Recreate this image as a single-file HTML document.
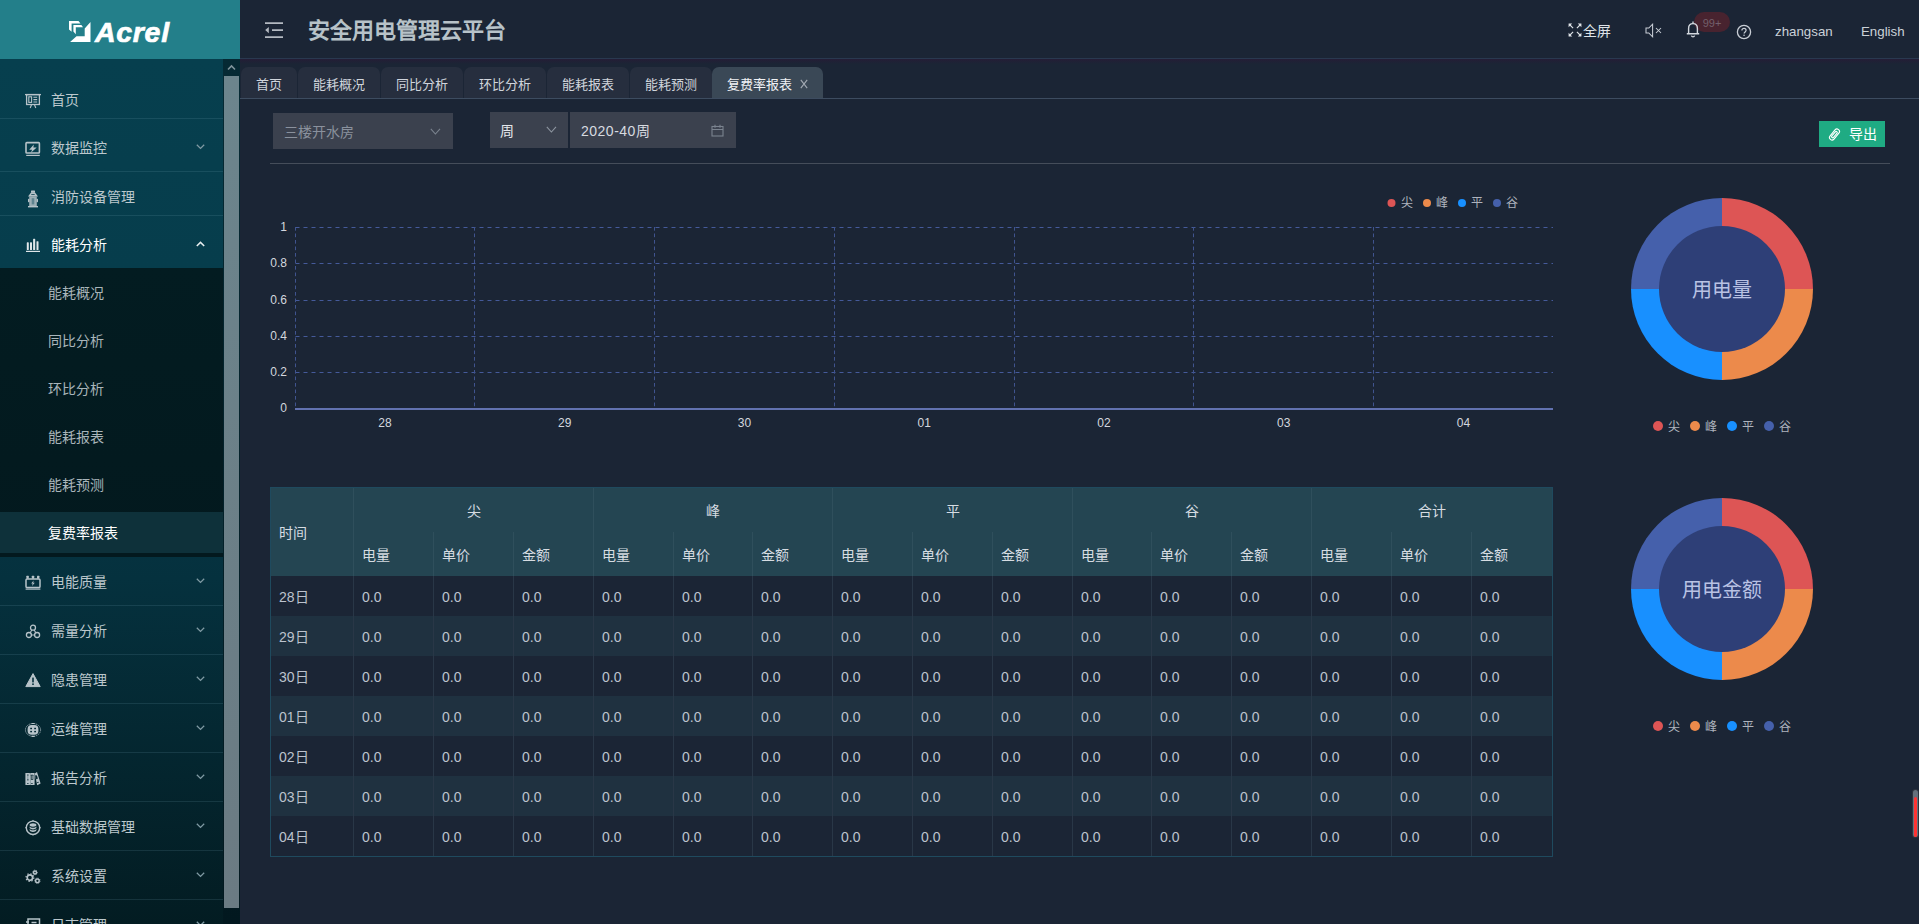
<!DOCTYPE html>
<html lang="zh-CN">
<head>
<meta charset="utf-8">
<title>安全用电管理云平台</title>
<style>
*{box-sizing:border-box;margin:0;padding:0}
html,body{width:1919px;height:924px;overflow:hidden;background:#1b2535}
body{position:relative;font-family:"Liberation Sans",sans-serif;font-size:14px;color:#cfd5dc}
.abs{position:absolute}
svg{display:block}
#logo{position:absolute;left:0;top:0;width:240px;height:59px;background:#237f8a}
#logo .txt{position:absolute;left:95px;top:14px;font-size:28.500px;line-height:36px;font-weight:bold;font-style:italic;color:#fff;letter-spacing:0.7px;-webkit-text-stroke:0.7px #fff}
#side{position:absolute;left:0;top:59px;width:223px;height:865px;background:linear-gradient(180deg,#063f4e 0px,#063d4c 210px,#05313e 520px,#031c22 865px);overflow:hidden}
#side .subbg{position:absolute;left:0;width:223px;background:linear-gradient(180deg,#031c21,#03191e)}
#side .subact{position:absolute;left:0;width:223px;background:#0e313a}
#sscroll{position:absolute;left:223px;top:59px;width:17px;height:865px;background:linear-gradient(180deg,#052a34,#02181f)}
#sscroll .thumb{position:absolute;left:1px;top:17px;width:15px;height:832px;background:linear-gradient(180deg,#6c858d,#6b7b83)}
.mi{position:absolute;left:0;width:223px;height:48px;line-height:48px;color:#bcc8cd;font-size:14px}
.mi .t{position:absolute;left:51px;top:0;white-space:nowrap}
.mi svg.ic{position:absolute;left:25px;top:16px;overflow:visible}
.mi svg.ar{position:absolute;left:196px;top:20px}
.sep{position:absolute;left:0;width:223px;height:1px;background:rgba(120,170,185,.16)}
.sub{position:absolute;left:0;width:223px;height:48px;line-height:48px;color:#a9b5ba;font-size:14px}
.sub.on{color:#fff;font-weight:normal}
.sub .t{position:absolute;left:48px;top:0;white-space:nowrap}
#hdr{position:absolute;left:240px;top:0;width:1679px;height:59px;background:#1b2535;border-bottom:1px solid #29384f}
#hshadow{position:absolute;left:240px;top:59px;width:1679px;height:5px;background:linear-gradient(180deg,#241d36,#1b2535)}
#title{position:absolute;left:308px;top:15px;font-size:22px;line-height:32px;font-weight:bold;color:#b7c2c8;white-space:nowrap}
.hr{position:absolute;white-space:nowrap;color:#dfe3e8;font-size:14px;line-height:20px}
.tab{position:absolute;top:67px;height:31px;line-height:35px;background:#262e3e;border-radius:7px 7px 0 0;color:#d0d5dc;font-size:13px;text-align:left;white-space:nowrap}
.tab.on{background:#3a4856;color:#f0f2f5}
#tabline{position:absolute;left:240px;top:98px;width:1679px;height:1px;background:#3d4c60}
.inp{position:absolute;background:#3b414e;height:36px;line-height:38px;font-size:14px;white-space:nowrap}
#hr1{position:absolute;left:270px;top:163px;width:1620px;height:1px;background:#454d5a}
#btn{position:absolute;left:1819px;top:121px;width:66px;height:26px;background:#1fab83;color:#fff;font-size:14px;line-height:26px}
#tbl{position:absolute;left:270px;top:487px;width:1283px;height:370px;border:1px solid #1f4a5e}
#tbl table{border-collapse:separate;table-layout:fixed;width:1281px;font-size:14px}
#tbl th{background:#244552;color:#d6dce2;font-weight:500;text-align:left;padding-left:7.5px;height:44px;border-right:1px solid #2f4f5c;font-size:14px}
#tbl th.g{text-align:center;padding-left:0;font-weight:normal}
#tbl th.tm{height:88px;padding-left:8px}
#tbl td{height:40px;padding-left:8px;padding-top:2px;color:#bcc3ce;border-right:1px solid #293747}
#tbl td.d{padding-left:8px;padding-top:0}
#tbl tr.ev td{background:#1f3140}
#tbl tr td:last-child,#tbl tr.h1 th:last-child,#tbl tr.h2 th:last-child{border-right:none}
</style>
</head>
<body>
<div id="hdr"></div><div id="hshadow"></div>
<svg style="position:absolute;left:264px;top:21px" width="20" height="18" viewBox="0 0 20 18" preserveAspectRatio="none"><g fill="none" stroke="#b4b9c1" stroke-width="1.9"><path d="M1 2.1h18M8 9.100h11M1 16.100h18"/></g><path d="M4.800 6v6.200L1.200 9.100z" fill="#b4b9c1"/></svg><div id="title">安全用电管理云平台</div>
<svg style="position:absolute;left:1568px;top:23px" width="14" height="14" viewBox="0 0 14 14" preserveAspectRatio="none"><g fill="none" stroke="#dfe3e8" stroke-width="1.1"><path d="M1.5 1.5l3.6 3.6M12.5 1.5l-3.6 3.600M1.5 12.5l3.6-3.600M12.5 12.5l-3.600-3.600"/></g><g fill="#dfe3e8"><path d="M.6.6h3.600L.6 4.200zM13.400.6v3.600L9.800.6zM.6 13.400V9.800l3.600 3.600zM13.400 13.400H9.800l3.600-3.600z"/></g></svg><div class="hr" style="left:1583px;top:21px">全屏</div>
<svg style="position:absolute;left:1645px;top:23px" width="18" height="15" viewBox="0 0 18 15" preserveAspectRatio="none"><g fill="none" stroke="#c9ced6" stroke-width="1.05"><path d="M1 5h2.8L7.6 1.2v12.6L3.8 10H1z"/><path d="M11 5l5 5M16 5l-5 5"/></g></svg><div class="abs" style="left:1694px;top:12px;width:36px;height:20px;border-radius:10px;background:#48232f;color:#735f6b;font-size:11px;line-height:22px;text-align:center">99+</div>
<svg style="position:absolute;left:1686px;top:21px" width="14" height="17" viewBox="0 0 14 17" preserveAspectRatio="none"><g fill="none" stroke="#d4d9df" stroke-width="1.4"><path d="M2.6 12.5V7.4C2.6 4.4 4.5 2.6 7 2.6s4.4 1.8 4.4 4.8v5.1"/><path d="M0.8 12.8h12.4M5.4 14.6c.3.9.9 1.3 1.6 1.3s1.3-.4 1.6-1.3M7 .6v2"/></g></svg><svg style="position:absolute;left:1736px;top:24px" width="16" height="16" viewBox="0 0 16 16" preserveAspectRatio="none"><circle cx="8" cy="8" r="6.6" fill="none" stroke="#c9ced6" stroke-width="1.3"/><path d="M5.9 6.4c0-1.2.9-2 2.1-2s2.1.8 2.1 1.9c0 1.6-2 1.7-2 3.3" fill="none" stroke="#c9ced6" stroke-width="1.2"/><circle cx="8.05" cy="11.3" r=".8" fill="#c9ced6"/></svg><div class="hr" style="left:1775px;top:22px;font-size:13.3px;color:#ccd2d9">zhangsan</div>
<div class="hr" style="left:1861px;top:22px;font-size:13.3px;color:#ccd2d9">English</div>
<div id="logo"><svg style="position:absolute;left:69px;top:20.5px" width="22" height="21.5" viewBox="0 0 22 23" preserveAspectRatio="none"><path d="M0 0h9.5l2 2.6H2.6v9L0 9z" fill="#fff"/><path d="M4.4 4.4h8l1.6 2.4H6.8v7.4l-2.4-3z" fill="#fff"/><path d="M21.5 1v22H0.5l7-6.6h8.2V8z" fill="#fff"/></svg><span class="txt">Acrel</span></div>
<div id="side">
<div class="subbg" style="top:209px;height:289px"></div>
<div class="subact" style="top:453px;height:41px"></div>
<div class="mi" style="top:17px"><svg class="ic" width="16" height="17" viewBox="0 0 16 17" preserveAspectRatio="none"><g fill="none" stroke="#b7c3c9" stroke-width="1.3"><path d="M0 2.6h16"/><rect x="1.6" y="2.6" width="12.800" height="9.900"/><rect x="3.800" y="4.800" width="2.800" height="5.600" stroke-width="1.1"/><path d="M8.400 5.200h3.800M8.400 7.600h3.800M8.400 10h3.800M6.600 12.500L5.200 16M9.400 12.500l1.400 3.500" stroke-width="1.1"/></g></svg><span class="t">首页</span></div>
<div class="mi" style="top:65px"><svg class="ic" width="16" height="17" viewBox="0 0 16 17" preserveAspectRatio="none"><g fill="none" stroke="#b7c3c9"><rect x="1" y="2.600" width="13.400" height="10.400" rx="0.800" stroke-width="1.600"/><path d="M1.200 15.400h13.600" stroke-width="1.200"/></g><path d="M8.800 4.400L4.200 9.700h2.900L5.900 12.800 11.700 7.400H8.400z" fill="#b7c3c9"/></svg><span class="t">数据监控</span><svg class="ar" width="9" height="6" viewBox="0 0 9 6" preserveAspectRatio="none"><path d="M0.8 0.8l3.7 3.6 3.7-3.6" fill="none" stroke="#7f9aa3" stroke-width="1.3"/></svg></div>
<div class="mi" style="top:114px"><svg class="ic" width="16" height="19" viewBox="0 0 16 19" preserveAspectRatio="none"><g fill="#b7c3c9"><rect x="6" y="1.600" width="4" height="2.200" rx="0.500"/><path d="M6 3.600h4l3 3.900H3z"/><rect x="4.200" y="7.400" width="7.600" height="9.700" opacity=".85"/><rect x="3" y="9.800" width="1.400" height="3.400" rx="0.600"/><rect x="11.600" y="9.800" width="1.400" height="3.400" rx="0.600"/><rect x="3" y="17" width="10" height="1.400"/></g><rect x="6.200" y="5.200" width="3.600" height="0.900" rx="0.400" fill="#063c4b"/><rect x="6.700" y="9.200" width="2.600" height="6.200" fill="#5f8490"/></svg><span class="t">消防设备管理</span></div>
<div class="mi" style="top:162px;color:#fff;font-weight:500"><svg class="ic" width="16" height="17" viewBox="0 0 16 17" preserveAspectRatio="none"><g fill="#dfe6e9"><rect x="1.800" y="5.300" width="2" height="7.800" rx="0.600"/><rect x="5" y="5.300" width="2" height="7.800" rx="0.600"/><rect x="8.100" y="1.800" width="2.100" height="11.300" rx="0.600"/><rect x="11.500" y="4.200" width="2" height="8.900" rx="0.600"/><rect x="1" y="13.800" width="14" height="1.200"/></g></svg><span class="t">能耗分析</span><svg class="ar" width="9" height="6" viewBox="0 0 9 6" preserveAspectRatio="none"><path d="M0.8 5l3.7-3.6 3.7 3.6" fill="none" stroke="#e8eef0" stroke-width="1.5"/></svg></div>
<div class="sub" style="top:210px"><span class="t">能耗概况</span></div>
<div class="sub" style="top:258px"><span class="t">同比分析</span></div>
<div class="sub" style="top:306px"><span class="t">环比分析</span></div>
<div class="sub" style="top:354px"><span class="t">能耗报表</span></div>
<div class="sub" style="top:402px"><span class="t">能耗预测</span></div>
<div class="sub on" style="top:450px"><span class="t">复费率报表</span></div>
<div class="mi" style="top:499px"><svg class="ic" width="16" height="17" viewBox="0 0 16 17" preserveAspectRatio="none"><g fill="none" stroke="#b7c3c9" stroke-width="1.500"><rect x="1" y="4.900" width="14" height="8.700" rx="1.200"/></g><g fill="#b7c3c9"><rect x="1.400" y="1.800" width="2.400" height="3" rx="0.500"/><rect x="6.800" y="1.800" width="2.400" height="3" rx="0.500"/><rect x="12" y="1.800" width="2.400" height="3" rx="0.500"/><rect x="0.600" y="14.500" width="14.800" height="1.200"/><path d="M8.600 6.400L6.200 9.600h1.500L7 12l2.800-3.300H8.200z"/></g></svg><span class="t">电能质量</span><svg class="ar" width="9" height="6" viewBox="0 0 9 6" preserveAspectRatio="none"><path d="M0.8 0.8l3.7 3.6 3.7-3.6" fill="none" stroke="#7f9aa3" stroke-width="1.3"/></svg></div>
<div class="mi" style="top:548px"><svg class="ic" width="16" height="17" viewBox="0 0 16 17" preserveAspectRatio="none"><g fill="none" stroke="#b7c3c9" stroke-width="1.300"><circle cx="8" cy="4.700" r="2.500"/><circle cx="3.900" cy="12" r="2.500"/><circle cx="12.100" cy="12" r="2.500"/><path d="M6.800 7L5.200 9.800M9.200 7l1.600 2.800M6.400 12h3.200" stroke-width="1.100"/></g></svg><span class="t">需量分析</span><svg class="ar" width="9" height="6" viewBox="0 0 9 6" preserveAspectRatio="none"><path d="M0.8 0.8l3.7 3.6 3.7-3.6" fill="none" stroke="#7f9aa3" stroke-width="1.3"/></svg></div>
<div class="mi" style="top:597px"><svg class="ic" width="16" height="17" viewBox="0 0 16 17" preserveAspectRatio="none"><path d="M8 1.600L15.200 14.600H0.800z" fill="#b7c3c9" stroke="#b7c3c9" stroke-width="1" stroke-linejoin="round"/><rect x="7.200" y="5.600" width="1.600" height="4.800" fill="#05303c"/><rect x="7.200" y="11.400" width="1.600" height="1.600" fill="#05303c"/></svg><span class="t">隐患管理</span><svg class="ar" width="9" height="6" viewBox="0 0 9 6" preserveAspectRatio="none"><path d="M0.8 0.8l3.7 3.6 3.7-3.6" fill="none" stroke="#7f9aa3" stroke-width="1.3"/></svg></div>
<div class="mi" style="top:646px"><svg class="ic" width="16" height="17" viewBox="0 0 16 17" preserveAspectRatio="none"><ellipse cx="8" cy="8.900" rx="7.600" ry="6.400" fill="none" stroke="#b7c3c9" stroke-width="0.900" stroke-dasharray="1.500 0.700" opacity=".8"/><rect x="2.600" y="4" width="10.800" height="9.800" rx="4" fill="#b7c3c9"/><path d="M6.600 1.900h3v1.200h-3zM6.600 14.800h3v1.200h-3z" fill="#b7c3c9"/><g fill="#042a35"><rect x="5.200" y="6.800" width="1.800" height="1.400"/><rect x="9.200" y="6.800" width="1.800" height="1.400"/><rect x="5.200" y="9.900" width="1.800" height="1.400"/><rect x="9.200" y="9.900" width="1.800" height="1.400"/></g></svg><span class="t">运维管理</span><svg class="ar" width="9" height="6" viewBox="0 0 9 6" preserveAspectRatio="none"><path d="M0.8 0.8l3.7 3.6 3.7-3.6" fill="none" stroke="#7f9aa3" stroke-width="1.3"/></svg></div>
<div class="mi" style="top:695px"><svg class="ic" width="16" height="17" viewBox="0 0 16 17" preserveAspectRatio="none"><g fill="#b7c3c9"><rect x="0.400" y="3" width="4.600" height="12" rx="0.500"/><rect x="5.200" y="3" width="4.400" height="12" rx="0.500"/><path d="M9.800 3.400l2.200-1.400 3.600 11.400-3.400 1.800z"/></g><g fill="#042631"><rect x="2" y="4.600" width="1.600" height="0.900"/><rect x="2" y="9.400" width="1.600" height="0.900"/><rect x="2" y="13.100" width="1.600" height="0.700"/><rect x="5.900" y="4.700" width="2.400" height="5" rx="0.500"/><rect x="6" y="13.100" width="1.800" height="0.700"/><rect x="10.600" y="5.200" width="1.800" height="4" rx="0.800" transform="rotate(-17 11.500 7.200)"/><rect x="12" y="12" width="1.800" height="0.700" transform="rotate(-17 12.900 12.300)"/></g><rect x="2.300" y="5.700" width="1" height="3.500" fill="#7f959d"/><rect x="6.600" y="5.400" width="1" height="3.600" fill="#b7c3c9"/></svg><span class="t">报告分析</span><svg class="ar" width="9" height="6" viewBox="0 0 9 6" preserveAspectRatio="none"><path d="M0.8 0.8l3.7 3.6 3.7-3.6" fill="none" stroke="#7f9aa3" stroke-width="1.3"/></svg></div>
<div class="mi" style="top:744px"><svg class="ic" width="16" height="17" viewBox="0 0 16 17" preserveAspectRatio="none"><circle cx="8" cy="8.800" r="6.700" fill="none" stroke="#b7c3c9" stroke-width="1.400"/><path d="M8 0.800l1 1.300H7zM8 16.800l1-1.300H7zM0 8.800l1.300-1v2zM16 8.800l-1.300-1v2z" fill="#b7c3c9"/><g fill="#b7c3c9"><ellipse cx="8" cy="6" rx="3.400" ry="1.700"/><path d="M4.600 7.400c.6.900 1.900 1.300 3.400 1.300s2.800-.4 3.400-1.300v1.700c-.6.900-1.900 1.300-3.400 1.300s-2.800-.4-3.400-1.300z"/><path d="M4.600 10c.6.900 1.900 1.300 3.400 1.300s2.800-.4 3.400-1.300v1.300c-.4 1-1.800 1.600-3.400 1.600s-3-.6-3.400-1.600z"/></g></svg><span class="t">基础数据管理</span><svg class="ar" width="9" height="6" viewBox="0 0 9 6" preserveAspectRatio="none"><path d="M0.8 0.8l3.7 3.6 3.7-3.6" fill="none" stroke="#7f9aa3" stroke-width="1.3"/></svg></div>
<div class="mi" style="top:793px"><svg class="ic" width="16" height="17" viewBox="0 0 16 17" preserveAspectRatio="none"><g fill="none" stroke="#b7c3c9"><circle cx="4.900" cy="9.600" r="2.700" stroke-width="1.700"/><circle cx="4.900" cy="9.600" r="3.900" stroke-width="1.200" stroke-dasharray="1.300 1.760"/><circle cx="10" cy="4.400" r="1.500" stroke-width="1.500"/><circle cx="10" cy="4.400" r="2.300" stroke-width="0.800" stroke-dasharray="0.900 0.900"/><circle cx="12.400" cy="12.800" r="1.800" stroke-width="1.400"/><circle cx="12.400" cy="12.800" r="2.700" stroke-width="0.900" stroke-dasharray="1 1.100"/></g></svg><span class="t">系统设置</span><svg class="ar" width="9" height="6" viewBox="0 0 9 6" preserveAspectRatio="none"><path d="M0.8 0.8l3.7 3.6 3.7-3.6" fill="none" stroke="#7f9aa3" stroke-width="1.3"/></svg></div>
<div class="mi" style="top:842px"><svg class="ic" width="16" height="17" viewBox="0 0 16 17" preserveAspectRatio="none"><g fill="none" stroke="#b7c3c9" stroke-width="1.500"><rect x="3" y="2" width="11.500" height="11"/><path d="M1 5h3M1 9h3M6.500 5.500h5M6.500 8.500h5"/></g></svg><span class="t">日志管理</span><svg class="ar" width="9" height="6" viewBox="0 0 9 6" preserveAspectRatio="none"><path d="M0.8 0.8l3.7 3.6 3.7-3.6" fill="none" stroke="#7f9aa3" stroke-width="1.3"/></svg></div>
<div class="sep" style="top:59px"></div>
<div class="sep" style="top:112px"></div>
<div class="sep" style="top:156px"></div>
<div class="sep" style="top:546px"></div>
<div class="sep" style="top:595px"></div>
<div class="sep" style="top:644px"></div>
<div class="sep" style="top:693px"></div>
<div class="sep" style="top:742px"></div>
<div class="sep" style="top:791px"></div>
<div class="sep" style="top:840px"></div>
</div>
<div id="sscroll"><svg style="position:absolute;left:0;top:0" width="17" height="17" viewBox="0 0 17 17" preserveAspectRatio="none"><path d="M5 10.5L8.5 7l3.5 3.5" fill="none" stroke="#7f959c" stroke-width="1.6"/></svg><div class="thumb"></div></div>
<div class="tab" style="left:241px;width:56px"><span style="padding-left:15px">首页</span></div>
<div class="tab" style="left:298px;width:82px"><span style="padding-left:15px">能耗概况</span></div>
<div class="tab" style="left:381px;width:82px"><span style="padding-left:15px">同比分析</span></div>
<div class="tab" style="left:464px;width:82px"><span style="padding-left:15px">环比分析</span></div>
<div class="tab" style="left:547px;width:82px"><span style="padding-left:15px">能耗报表</span></div>
<div class="tab" style="left:630px;width:82px"><span style="padding-left:15px">能耗预测</span></div>
<div class="tab on" style="left:712px;width:111px"><span style="padding-left:15px">复费率报表</span><svg style="position:absolute;left:88px;top:11.5px" width="8" height="10" viewBox="0 0 8 10" preserveAspectRatio="none"><path d="M0.800 0.800L7.200 9.200M7.200 0.800L0.800 9.200" stroke="#a3abb4" stroke-width="1.1" fill="none"/></svg></div>
<div id="tabline"></div>
<div class="inp" style="left:273px;top:113px;width:180px;color:#8a919d"><span style="padding-left:11px">三楼开水房</span><svg style="position:absolute;left:157px;top:15px" width="11" height="7" viewBox="0 0 11 7" preserveAspectRatio="none"><path d="M0.8 0.8l4.6 5.2 4.6-5.2" fill="none" stroke="#7b838f" stroke-width="1.1"/></svg></div>
<div class="inp" style="left:490px;top:112px;width:78px;color:#e4e7eb"><span style="padding-left:10px">周</span><svg style="position:absolute;left:56px;top:14px" width="11" height="7" viewBox="0 0 11 7" preserveAspectRatio="none"><path d="M0.8 0.8l4.6 5.2 4.6-5.2" fill="none" stroke="#8d95a0" stroke-width="1.1"/></svg></div>
<div class="inp" style="left:570px;top:112px;width:166px;color:#d7dbe0"><span style="padding-left:11px;letter-spacing:0.5px">2020-40周</span><svg style="position:absolute;left:140.5px;top:11.5px" width="13" height="13" viewBox="0 0 13 13" preserveAspectRatio="none"><g fill="none" stroke="#7b838f" stroke-width="1.1"><rect x="1" y="2.5" width="11" height="9.5"/><path d="M1 5.5h11M4 .8v3M9 .8v3"/></g></svg></div>
<div id="hr1"></div>
<div id="btn"><svg style="position:absolute;left:8.5px;top:6.5px" width="13" height="13" viewBox="0 0 13 13" preserveAspectRatio="none"><g transform="rotate(40 6.5 6.5)" fill="none" stroke="#fff" stroke-width="1.15"><rect x="4" y="0.2" width="5" height="12.600" rx="2.5"/><rect x="5.400" y="2.800" width="2.200" height="7.600" rx="1.100"/></g></svg><span style="position:absolute;left:30px;top:0">导出</span></div>
<svg style="position:absolute;left:240px;top:180px;font-family:'Liberation Sans',sans-serif" width="1330" height="260" viewBox="0 0 1330 260"><path d="M55.5 47.5H1313" stroke="#455a9a" stroke-width="1" stroke-dasharray="4 4" fill="none"/><path d="M55.5 83.5H1313" stroke="#455a9a" stroke-width="1" stroke-dasharray="4 4" fill="none"/><path d="M55.5 120.5H1313" stroke="#455a9a" stroke-width="1" stroke-dasharray="4 4" fill="none"/><path d="M55.5 156.5H1313" stroke="#455a9a" stroke-width="1" stroke-dasharray="4 4" fill="none"/><path d="M55.5 192.5H1313" stroke="#455a9a" stroke-width="1" stroke-dasharray="4 4" fill="none"/><path d="M55.5 47V228" stroke="#40548f" stroke-width="1" stroke-dasharray="3.7 2.800" fill="none"/><path d="M234.5 47V228" stroke="#40548f" stroke-width="1" stroke-dasharray="3.7 2.800" fill="none"/><path d="M414.5 47V228" stroke="#40548f" stroke-width="1" stroke-dasharray="3.7 2.800" fill="none"/><path d="M594.5 47V228" stroke="#40548f" stroke-width="1" stroke-dasharray="3.7 2.800" fill="none"/><path d="M774.5 47V228" stroke="#40548f" stroke-width="1" stroke-dasharray="3.7 2.800" fill="none"/><path d="M953.5 47V228" stroke="#40548f" stroke-width="1" stroke-dasharray="3.7 2.800" fill="none"/><path d="M1133.5 47V228" stroke="#40548f" stroke-width="1" stroke-dasharray="3.7 2.800" fill="none"/><path d="M55 229H1313" stroke="#6272b0" stroke-width="2" fill="none"/><text x="47" y="51.1" text-anchor="end" font-size="12" fill="#d3d7de">1</text><text x="47" y="87.1" text-anchor="end" font-size="12" fill="#d3d7de">0.8</text><text x="47" y="124.1" text-anchor="end" font-size="12" fill="#d3d7de">0.6</text><text x="47" y="160.1" text-anchor="end" font-size="12" fill="#d3d7de">0.4</text><text x="47" y="196.1" text-anchor="end" font-size="12" fill="#d3d7de">0.2</text><text x="47" y="232.1" text-anchor="end" font-size="12" fill="#d3d7de">0</text><text x="144.9" y="247" text-anchor="middle" font-size="12" fill="#d3d7de">28</text><text x="324.7" y="247" text-anchor="middle" font-size="12" fill="#d3d7de">29</text><text x="504.4" y="247" text-anchor="middle" font-size="12" fill="#d3d7de">30</text><text x="684.2" y="247" text-anchor="middle" font-size="12" fill="#d3d7de">01</text><text x="864.0" y="247" text-anchor="middle" font-size="12" fill="#d3d7de">02</text><text x="1043.7" y="247" text-anchor="middle" font-size="12" fill="#d3d7de">03</text><text x="1223.5" y="247" text-anchor="middle" font-size="12" fill="#d3d7de">04</text><circle cx="1151.5" cy="23" r="4" fill="#dd5555"/><text x="1160.5" y="27" font-size="12" fill="#aeb3bd">尖</text><circle cx="1187" cy="23" r="4" fill="#ec8a4b"/><text x="1196" y="27" font-size="12" fill="#aeb3bd">峰</text><circle cx="1222" cy="23" r="4" fill="#1890ff"/><text x="1231" y="27" font-size="12" fill="#aeb3bd">平</text><circle cx="1257" cy="23" r="4" fill="#4560ab"/><text x="1266" y="27" font-size="12" fill="#aeb3bd">谷</text></svg>
<div id="tbl">
<table cellspacing="0" cellpadding="0">
<colgroup><col style="width:83px"><col style="width:80px"><col style="width:80px"><col style="width:80px"><col style="width:80px"><col style="width:79px"><col style="width:80px"><col style="width:80px"><col style="width:80px"><col style="width:80px"><col style="width:79px"><col style="width:80px"><col style="width:80px"><col style="width:80px"><col style="width:80px"><col style="width:80px"></colgroup>
<thead><tr class="h1"><th rowspan="2" class="tm">时间</th><th colspan="3" class="g">尖</th><th colspan="3" class="g">峰</th><th colspan="3" class="g">平</th><th colspan="3" class="g">谷</th><th colspan="3" class="g">合计</th></tr>
<tr class="h2"><th>电量</th><th>单价</th><th>金额</th><th>电量</th><th>单价</th><th>金额</th><th>电量</th><th>单价</th><th>金额</th><th>电量</th><th>单价</th><th>金额</th><th>电量</th><th>单价</th><th>金额</th></tr></thead>
<tbody>
<tr><td class="d">28日</td><td>0.0</td><td>0.0</td><td>0.0</td><td>0.0</td><td>0.0</td><td>0.0</td><td>0.0</td><td>0.0</td><td>0.0</td><td>0.0</td><td>0.0</td><td>0.0</td><td>0.0</td><td>0.0</td><td>0.0</td></tr>
<tr class="ev"><td class="d">29日</td><td>0.0</td><td>0.0</td><td>0.0</td><td>0.0</td><td>0.0</td><td>0.0</td><td>0.0</td><td>0.0</td><td>0.0</td><td>0.0</td><td>0.0</td><td>0.0</td><td>0.0</td><td>0.0</td><td>0.0</td></tr>
<tr><td class="d">30日</td><td>0.0</td><td>0.0</td><td>0.0</td><td>0.0</td><td>0.0</td><td>0.0</td><td>0.0</td><td>0.0</td><td>0.0</td><td>0.0</td><td>0.0</td><td>0.0</td><td>0.0</td><td>0.0</td><td>0.0</td></tr>
<tr class="ev"><td class="d">01日</td><td>0.0</td><td>0.0</td><td>0.0</td><td>0.0</td><td>0.0</td><td>0.0</td><td>0.0</td><td>0.0</td><td>0.0</td><td>0.0</td><td>0.0</td><td>0.0</td><td>0.0</td><td>0.0</td><td>0.0</td></tr>
<tr><td class="d">02日</td><td>0.0</td><td>0.0</td><td>0.0</td><td>0.0</td><td>0.0</td><td>0.0</td><td>0.0</td><td>0.0</td><td>0.0</td><td>0.0</td><td>0.0</td><td>0.0</td><td>0.0</td><td>0.0</td><td>0.0</td></tr>
<tr class="ev"><td class="d">03日</td><td>0.0</td><td>0.0</td><td>0.0</td><td>0.0</td><td>0.0</td><td>0.0</td><td>0.0</td><td>0.0</td><td>0.0</td><td>0.0</td><td>0.0</td><td>0.0</td><td>0.0</td><td>0.0</td><td>0.0</td></tr>
<tr><td class="d">04日</td><td>0.0</td><td>0.0</td><td>0.0</td><td>0.0</td><td>0.0</td><td>0.0</td><td>0.0</td><td>0.0</td><td>0.0</td><td>0.0</td><td>0.0</td><td>0.0</td><td>0.0</td><td>0.0</td><td>0.0</td></tr>
</tbody></table>
</div>
<svg style="position:absolute;left:1620px;top:189px;font-family:'Liberation Sans',sans-serif" width="210" height="250" viewBox="0 0 210 250"><path d="M102 100L102.00 9.00A91 91 0 0 1 193.00 100.00Z" fill="#dd5555"/><path d="M102 100L193.00 100.00A91 91 0 0 1 102.00 191.00Z" fill="#ec8a4b"/><path d="M102 100L102.00 191.00A91 91 0 0 1 11.00 100.00Z" fill="#1890ff"/><path d="M102 100L11.00 100.00A91 91 0 0 1 102.00 9.00Z" fill="#4560ab"/><circle cx="102" cy="100" r="63" fill="#2e3f77"/><text x="102" y="107.5" text-anchor="middle" font-size="20" fill="#b9c2e4">用电量</text><circle cx="38" cy="237" r="5" fill="#dd5555"/><text x="48" y="241.5" font-size="12" fill="#aeb3bd">尖</text><circle cx="75" cy="237" r="5" fill="#ec8a4b"/><text x="85" y="241.5" font-size="12" fill="#aeb3bd">峰</text><circle cx="112" cy="237" r="5" fill="#1890ff"/><text x="122" y="241.5" font-size="12" fill="#aeb3bd">平</text><circle cx="149" cy="237" r="5" fill="#4560ab"/><text x="159" y="241.5" font-size="12" fill="#aeb3bd">谷</text></svg>
<svg style="position:absolute;left:1620px;top:489px;font-family:'Liberation Sans',sans-serif" width="210" height="250" viewBox="0 0 210 250"><path d="M102 100L102.00 9.00A91 91 0 0 1 193.00 100.00Z" fill="#dd5555"/><path d="M102 100L193.00 100.00A91 91 0 0 1 102.00 191.00Z" fill="#ec8a4b"/><path d="M102 100L102.00 191.00A91 91 0 0 1 11.00 100.00Z" fill="#1890ff"/><path d="M102 100L11.00 100.00A91 91 0 0 1 102.00 9.00Z" fill="#4560ab"/><circle cx="102" cy="100" r="63" fill="#2e3f77"/><text x="102" y="107.5" text-anchor="middle" font-size="20" fill="#b9c2e4">用电金额</text><circle cx="38" cy="237" r="5" fill="#dd5555"/><text x="48" y="241.5" font-size="12" fill="#aeb3bd">尖</text><circle cx="75" cy="237" r="5" fill="#ec8a4b"/><text x="85" y="241.5" font-size="12" fill="#aeb3bd">峰</text><circle cx="112" cy="237" r="5" fill="#1890ff"/><text x="122" y="241.5" font-size="12" fill="#aeb3bd">平</text><circle cx="149" cy="237" r="5" fill="#4560ab"/><text x="159" y="241.5" font-size="12" fill="#aeb3bd">谷</text></svg>
<div class="abs" style="left:1912px;top:789px;width:7px;height:49px;border-radius:4px;background:#2e333e"></div><div class="abs" style="left:1913px;top:790px;width:5px;height:47px;border-radius:3px;background:#65707c"></div><div class="abs" style="left:1914px;top:797px;width:3px;height:40px;border-radius:2px;background:#ff3333"></div>
</body>
</html>
